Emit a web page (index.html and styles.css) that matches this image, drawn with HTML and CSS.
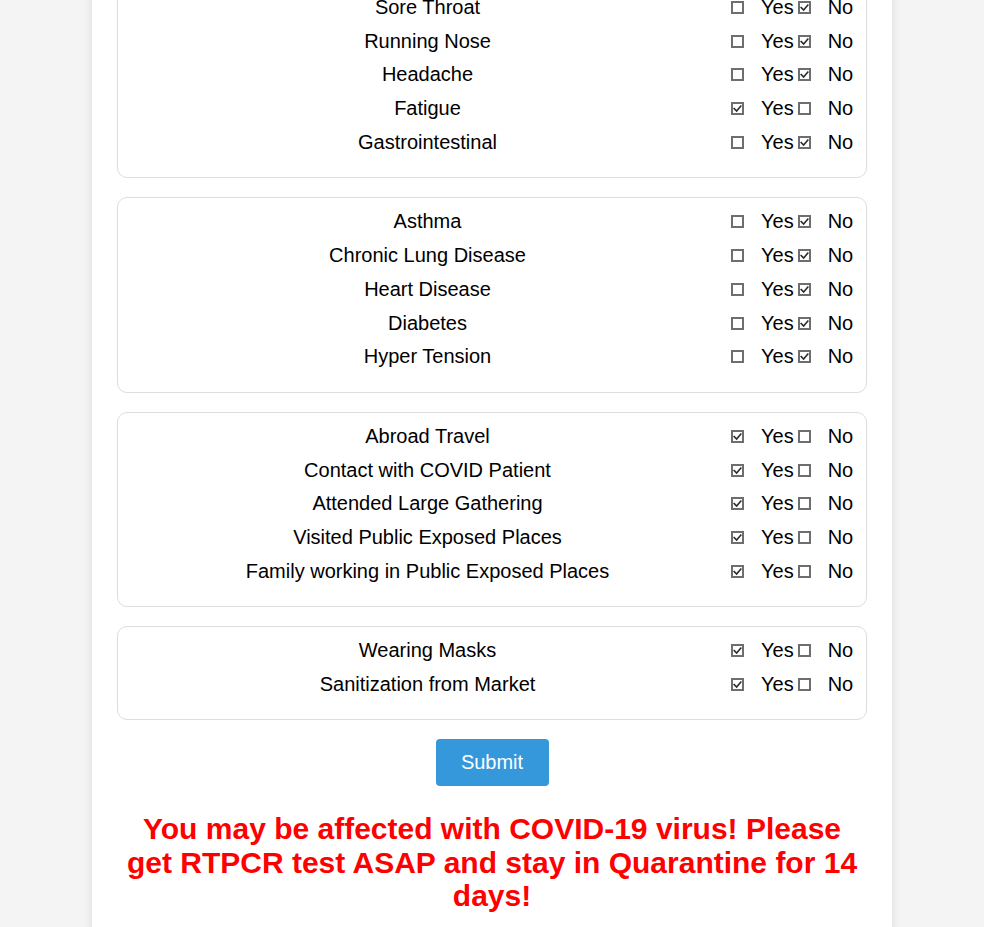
FILE: index.html
```html
<!DOCTYPE html>
<html lang="en">
<head>
<meta charset="utf-8">
<title>COVID-19 Self Assessment</title>
<link rel="stylesheet" href="styles.css">
</head>
<body>
<div class="container">
  <div class="card">
    <div class="row"><span class="label">Fever</span><span class="opts"><span class="cb"><svg viewBox="0 0 13 13"><rect x="1" y="1" width="11" height="11"/></svg></span><span class="opt">Yes</span><span class="cb on"><svg viewBox="0 0 13 13"><rect x="1" y="1" width="11" height="11"/><polyline points="3.2,6.6 5.6,9 9.8,4.2"/></svg></span><span class="opt">No</span></span></div>
    <div class="row"><span class="label">Dry Cough</span><span class="opts"><span class="cb"><svg viewBox="0 0 13 13"><rect x="1" y="1" width="11" height="11"/></svg></span><span class="opt">Yes</span><span class="cb on"><svg viewBox="0 0 13 13"><rect x="1" y="1" width="11" height="11"/><polyline points="3.2,6.6 5.6,9 9.8,4.2"/></svg></span><span class="opt">No</span></span></div>
    <div class="row"><span class="label">Sore Throat</span><span class="opts"><span class="cb"><svg viewBox="0 0 13 13"><rect x="1" y="1" width="11" height="11"/></svg></span><span class="opt">Yes</span><span class="cb on"><svg viewBox="0 0 13 13"><rect x="1" y="1" width="11" height="11"/><polyline points="3.2,6.6 5.6,9 9.8,4.2"/></svg></span><span class="opt">No</span></span></div>
    <div class="row"><span class="label">Running Nose</span><span class="opts"><span class="cb"><svg viewBox="0 0 13 13"><rect x="1" y="1" width="11" height="11"/></svg></span><span class="opt">Yes</span><span class="cb on"><svg viewBox="0 0 13 13"><rect x="1" y="1" width="11" height="11"/><polyline points="3.2,6.6 5.6,9 9.8,4.2"/></svg></span><span class="opt">No</span></span></div>
    <div class="row"><span class="label">Headache</span><span class="opts"><span class="cb"><svg viewBox="0 0 13 13"><rect x="1" y="1" width="11" height="11"/></svg></span><span class="opt">Yes</span><span class="cb on"><svg viewBox="0 0 13 13"><rect x="1" y="1" width="11" height="11"/><polyline points="3.2,6.6 5.6,9 9.8,4.2"/></svg></span><span class="opt">No</span></span></div>
    <div class="row"><span class="label">Fatigue</span><span class="opts"><span class="cb on"><svg viewBox="0 0 13 13"><rect x="1" y="1" width="11" height="11"/><polyline points="3.2,6.6 5.6,9 9.8,4.2"/></svg></span><span class="opt">Yes</span><span class="cb"><svg viewBox="0 0 13 13"><rect x="1" y="1" width="11" height="11"/></svg></span><span class="opt">No</span></span></div>
    <div class="row"><span class="label">Gastrointestinal</span><span class="opts"><span class="cb"><svg viewBox="0 0 13 13"><rect x="1" y="1" width="11" height="11"/></svg></span><span class="opt">Yes</span><span class="cb on"><svg viewBox="0 0 13 13"><rect x="1" y="1" width="11" height="11"/><polyline points="3.2,6.6 5.6,9 9.8,4.2"/></svg></span><span class="opt">No</span></span></div>
  </div>

  <div class="card">
    <div class="row"><span class="label">Asthma</span><span class="opts"><span class="cb"><svg viewBox="0 0 13 13"><rect x="1" y="1" width="11" height="11"/></svg></span><span class="opt">Yes</span><span class="cb on"><svg viewBox="0 0 13 13"><rect x="1" y="1" width="11" height="11"/><polyline points="3.2,6.6 5.6,9 9.8,4.2"/></svg></span><span class="opt">No</span></span></div>
    <div class="row"><span class="label">Chronic Lung Disease</span><span class="opts"><span class="cb"><svg viewBox="0 0 13 13"><rect x="1" y="1" width="11" height="11"/></svg></span><span class="opt">Yes</span><span class="cb on"><svg viewBox="0 0 13 13"><rect x="1" y="1" width="11" height="11"/><polyline points="3.2,6.6 5.6,9 9.8,4.2"/></svg></span><span class="opt">No</span></span></div>
    <div class="row"><span class="label">Heart Disease</span><span class="opts"><span class="cb"><svg viewBox="0 0 13 13"><rect x="1" y="1" width="11" height="11"/></svg></span><span class="opt">Yes</span><span class="cb on"><svg viewBox="0 0 13 13"><rect x="1" y="1" width="11" height="11"/><polyline points="3.2,6.6 5.6,9 9.8,4.2"/></svg></span><span class="opt">No</span></span></div>
    <div class="row"><span class="label">Diabetes</span><span class="opts"><span class="cb"><svg viewBox="0 0 13 13"><rect x="1" y="1" width="11" height="11"/></svg></span><span class="opt">Yes</span><span class="cb on"><svg viewBox="0 0 13 13"><rect x="1" y="1" width="11" height="11"/><polyline points="3.2,6.6 5.6,9 9.8,4.2"/></svg></span><span class="opt">No</span></span></div>
    <div class="row"><span class="label">Hyper Tension</span><span class="opts"><span class="cb"><svg viewBox="0 0 13 13"><rect x="1" y="1" width="11" height="11"/></svg></span><span class="opt">Yes</span><span class="cb on"><svg viewBox="0 0 13 13"><rect x="1" y="1" width="11" height="11"/><polyline points="3.2,6.6 5.6,9 9.8,4.2"/></svg></span><span class="opt">No</span></span></div>
  </div>

  <div class="card">
    <div class="row"><span class="label">Abroad Travel</span><span class="opts"><span class="cb on"><svg viewBox="0 0 13 13"><rect x="1" y="1" width="11" height="11"/><polyline points="3.2,6.6 5.6,9 9.8,4.2"/></svg></span><span class="opt">Yes</span><span class="cb"><svg viewBox="0 0 13 13"><rect x="1" y="1" width="11" height="11"/></svg></span><span class="opt">No</span></span></div>
    <div class="row"><span class="label">Contact with COVID Patient</span><span class="opts"><span class="cb on"><svg viewBox="0 0 13 13"><rect x="1" y="1" width="11" height="11"/><polyline points="3.2,6.6 5.6,9 9.8,4.2"/></svg></span><span class="opt">Yes</span><span class="cb"><svg viewBox="0 0 13 13"><rect x="1" y="1" width="11" height="11"/></svg></span><span class="opt">No</span></span></div>
    <div class="row"><span class="label">Attended Large Gathering</span><span class="opts"><span class="cb on"><svg viewBox="0 0 13 13"><rect x="1" y="1" width="11" height="11"/><polyline points="3.2,6.6 5.6,9 9.8,4.2"/></svg></span><span class="opt">Yes</span><span class="cb"><svg viewBox="0 0 13 13"><rect x="1" y="1" width="11" height="11"/></svg></span><span class="opt">No</span></span></div>
    <div class="row"><span class="label">Visited Public Exposed Places</span><span class="opts"><span class="cb on"><svg viewBox="0 0 13 13"><rect x="1" y="1" width="11" height="11"/><polyline points="3.2,6.6 5.6,9 9.8,4.2"/></svg></span><span class="opt">Yes</span><span class="cb"><svg viewBox="0 0 13 13"><rect x="1" y="1" width="11" height="11"/></svg></span><span class="opt">No</span></span></div>
    <div class="row"><span class="label">Family working in Public Exposed Places</span><span class="opts"><span class="cb on"><svg viewBox="0 0 13 13"><rect x="1" y="1" width="11" height="11"/><polyline points="3.2,6.6 5.6,9 9.8,4.2"/></svg></span><span class="opt">Yes</span><span class="cb"><svg viewBox="0 0 13 13"><rect x="1" y="1" width="11" height="11"/></svg></span><span class="opt">No</span></span></div>
  </div>

  <div class="card">
    <div class="row"><span class="label">Wearing Masks</span><span class="opts"><span class="cb on"><svg viewBox="0 0 13 13"><rect x="1" y="1" width="11" height="11"/><polyline points="3.2,6.6 5.6,9 9.8,4.2"/></svg></span><span class="opt">Yes</span><span class="cb"><svg viewBox="0 0 13 13"><rect x="1" y="1" width="11" height="11"/></svg></span><span class="opt">No</span></span></div>
    <div class="row"><span class="label">Sanitization from Market</span><span class="opts"><span class="cb on"><svg viewBox="0 0 13 13"><rect x="1" y="1" width="11" height="11"/><polyline points="3.2,6.6 5.6,9 9.8,4.2"/></svg></span><span class="opt">Yes</span><span class="cb"><svg viewBox="0 0 13 13"><rect x="1" y="1" width="11" height="11"/></svg></span><span class="opt">No</span></span></div>
  </div>

  <div class="actions"><button class="submit" type="button">Submit</button></div>

  <h2 class="result">You may be affected with COVID-19 virus! Please get RTPCR test ASAP and stay in Quarantine for 14 days!</h2>
</div>
</body>
</html>
```

FILE: styles.css
```css
html, body {
  margin: 0;
  padding: 0;
  background: #f4f4f4;
  font-family: "Liberation Sans", Arial, sans-serif;
  color: #000;
}

.container {
  width: 800px;
  box-sizing: border-box;
  margin: -110px auto 0;
  padding: 25px 25px 40px;
  background: #fff;
  box-shadow: 0 0 10px rgba(0, 0, 0, 0.1);
}

.card {
  border: 1px solid #ddd;
  border-radius: 10px;
  padding: 7px 10px 17.75px;
  margin-bottom: 19px;
}

.row {
  display: flex;
  align-items: center;
  height: 33.75px;
  font-size: 20px;
}

.label {
  flex: 1;
  text-align: center;
}

.opts {
  display: flex;
  align-items: center;
  width: 128px;
  padding-right: 1px;
}

.cb {
  display: inline-flex;
  width: 13px;
  height: 13px;
  margin: 0 3px 0 4px;
}

.cb svg {
  width: 13px;
  height: 13px;
  display: block;
}

.cb rect {
  fill: #fff;
  stroke: #6e6e6e;
  stroke-width: 2;
}

.cb polyline {
  fill: none;
  stroke: #2b2b2b;
  stroke-width: 1.6;
  stroke-linecap: square;
}

.opt {
  margin-left: 14px;
}

.actions {
  display: flex;
  justify-content: center;
}

.submit {
  font-family: "Liberation Sans", Arial, sans-serif;
  font-size: 20px;
  color: #fff;
  background: #3498db;
  border: none;
  border-radius: 4px;
  width: 113px;
  height: 47px;
  padding: 0;
}

.result {
  margin: 26px 0 0;
  padding: 0 6px;
  color: #ff0000;
  text-align: center;
  font-size: 30px;
  font-weight: bold;
  line-height: 33.5px;
}
```
